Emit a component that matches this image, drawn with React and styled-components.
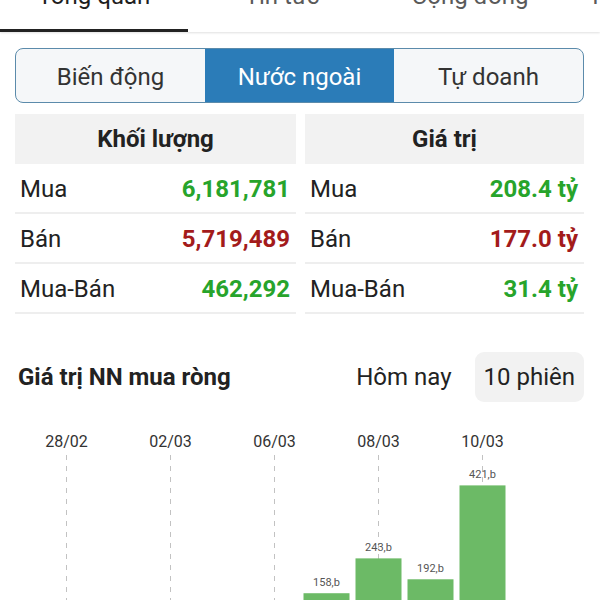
import React from "react";
import styled, { createGlobalStyle } from "styled-components";

const GlobalStyle = createGlobalStyle`
    html, body {
        margin: 0;
        padding: 0;
        overflow: hidden;
        background: #ffffff;
        font-family: Roboto, "Noto Sans", "Liberation Sans", sans-serif;
    }
`;

const tabs = ["Tổng quan", "Tin tức", "Cộng đồng", "Thông tin DN"];
const segments = ["Biến động", "Nước ngoài", "Tự doanh"];

const tables = [
    {
        title: "Khối lượng",
        rows: [
            ["Mua", "6,181,781", "up"],
            ["Bán", "5,719,489", "down"],
            ["Mua-Bán", "462,292", "up"],
        ],
    },
    {
        title: "Giá trị",
        rows: [
            ["Mua", "208.4 tỷ", "up"],
            ["Bán", "177.0 tỷ", "down"],
            ["Mua-Bán", "31.4 tỷ", "up"],
        ],
    },
];

// slot index 0..9, only positive sessions visible above the fold
const sessions = [
    { date: "27/02", value: 0 },
    { date: "28/02", value: 0 },
    { date: "01/03", value: 0 },
    { date: "02/03", value: 0 },
    { date: "03/03", value: 0 },
    { date: "06/03", value: 0 },
    { date: "07/03", value: 158 },
    { date: "08/03", value: 243 },
    { date: "09/03", value: 192 },
    { date: "10/03", value: 421 },
];
const tickSlots = [1, 3, 5, 7, 9];

const Page = styled.div`
    width: 600px;
    height: 600px;
    overflow: hidden;
    display: flex;
    flex-direction: column;
`;

const TabBar = styled.div`
    display: flex;
    height: 48px;
    margin-top: -16px;
    box-shadow: 0 1px 2px rgba(0, 0, 0, 0.12);
    overflow: hidden;
    flex-shrink: 0;
`;

const Tab = styled.div`
    flex: 0 0 188px;
    box-sizing: border-box;
    text-align: center;
    font-size: 24px;
    line-height: 24px;
    white-space: nowrap;
    color: ${(p) => (p.$active ? "#1f1f1f" : "#5a5a5a")};
    border-bottom: 3px solid ${(p) => (p.$active ? "#222222" : "transparent")};
`;

const Segmented = styled.div`
    display: flex;
    height: 55px;
    margin: 16px 16px 0 15px;
    box-sizing: border-box;
    border: 1.5px solid #5b8bab;
    border-radius: 8px;
    overflow: hidden;
    background: #f5f7f9;
    flex-shrink: 0;
`;

const Segment = styled.div`
    flex: 1;
    display: flex;
    align-items: center;
    justify-content: center;
    padding-top: 2px;
    font-size: 24px;
    color: ${(p) => (p.$active ? "#ffffff" : "#333333")};
    background: ${(p) => (p.$active ? "#2b7cb8" : "transparent")};
`;

const Tables = styled.div`
    display: grid;
    grid-template-columns: 281px 279px;
    column-gap: 9px;
    margin: 11px 16px 0 15px;
    flex-shrink: 0;
`;

const Table = styled.div`
    display: flex;
    flex-direction: column;
`;

const HeadCell = styled.div`
    height: 50px;
    display: flex;
    align-items: center;
    justify-content: center;
    background: #f2f2f2;
    font-size: 24px;
    font-weight: 700;
    color: #222222;
`;

const Row = styled.div`
    height: 50px;
    box-sizing: border-box;
    display: flex;
    align-items: center;
    justify-content: space-between;
    padding: 2px 6px 0 5px;
    border-bottom: 2px solid #eeeeee;
`;

const Label = styled.span`
    font-size: 24px;
    color: #222222;
`;

const Value = styled.span`
    font-size: 24px;
    font-weight: 700;
    color: ${(p) => (p.$trend === "down" ? "#a31b1b" : "#27a42b")};
`;

const SectionHead = styled.div`
    display: flex;
    align-items: center;
    justify-content: space-between;
    height: 50px;
    margin: 38px 16px 0 18px;
    flex-shrink: 0;
`;

const SectionTitle = styled.div`
    font-size: 24px;
    font-weight: 700;
    color: #222222;
`;

const Options = styled.div`
    display: flex;
    gap: 14px;
    height: 100%;
`;

const Option = styled.div`
    display: flex;
    align-items: center;
    padding: 0 9px;
    border-radius: 9px;
    font-size: 24px;
    color: #222222;
    background: ${(p) => (p.$active ? "#f2f2f2" : "transparent")};
`;

const ChartWrap = styled.div`
    margin-top: 19px;
    flex-shrink: 0;
`;

function NetBuyChart() {
    const slotX = (i) => 482.5 - 52 * (9 - i);
    const base = 237;
    const scale = 0.41;
    return (
        <svg width="600" height="260" viewBox="0 0 600 260">
            {tickSlots.map((i) => (
                <g key={i}>
                    <text
                        x={slotX(i)}
                        y="26"
                        textAnchor="middle"
                        fontSize="16"
                        fontFamily="Roboto, sans-serif"
                        fill="#333333"
                    >
                        {sessions[i].date}
                    </text>
                    <line
                        x1={slotX(i)}
                        x2={slotX(i)}
                        y1="34"
                        y2="260"
                        stroke="#c2c2c2"
                        strokeWidth="1"
                        strokeDasharray="5 6"
                    />
                </g>
            ))}
            {sessions.map((s, i) =>
                s.value > 0 ? (
                    <g key={s.date}>
                        <text
                            x={slotX(i)}
                            y={base - s.value * scale - 7}
                            textAnchor="middle"
                            fontSize="11"
                            fontFamily="Roboto, sans-serif"
                            fill="#555555"
                        >
                            {s.value},b
                        </text>
                        <rect
                            x={slotX(i) - 23}
                            y={base - s.value * scale}
                            width="46"
                            height={s.value * scale + 30}
                            fill="#6cba66"
                        />
                    </g>
                ) : null
            )}
        </svg>
    );
}

export default function App() {
    return (
        <Page>
            <GlobalStyle />
            <TabBar>
                {tabs.map((t, i) => (
                    <Tab key={t} $active={i === 0}>
                        {t}
                    </Tab>
                ))}
            </TabBar>
            <Segmented>
                {segments.map((s, i) => (
                    <Segment key={s} $active={i === 1}>
                        {s}
                    </Segment>
                ))}
            </Segmented>
            <Tables>
                {tables.map((tb) => (
                    <Table key={tb.title}>
                        <HeadCell>{tb.title}</HeadCell>
                        {tb.rows.map(([label, value, trend]) => (
                            <Row key={label}>
                                <Label>{label}</Label>
                                <Value $trend={trend}>{value}</Value>
                            </Row>
                        ))}
                    </Table>
                ))}
            </Tables>
            <SectionHead>
                <SectionTitle>Giá trị NN mua ròng</SectionTitle>
                <Options>
                    <Option>Hôm nay</Option>
                    <Option $active>10 phiên</Option>
                </Options>
            </SectionHead>
            <ChartWrap>
                <NetBuyChart />
            </ChartWrap>
        </Page>
    );
}
